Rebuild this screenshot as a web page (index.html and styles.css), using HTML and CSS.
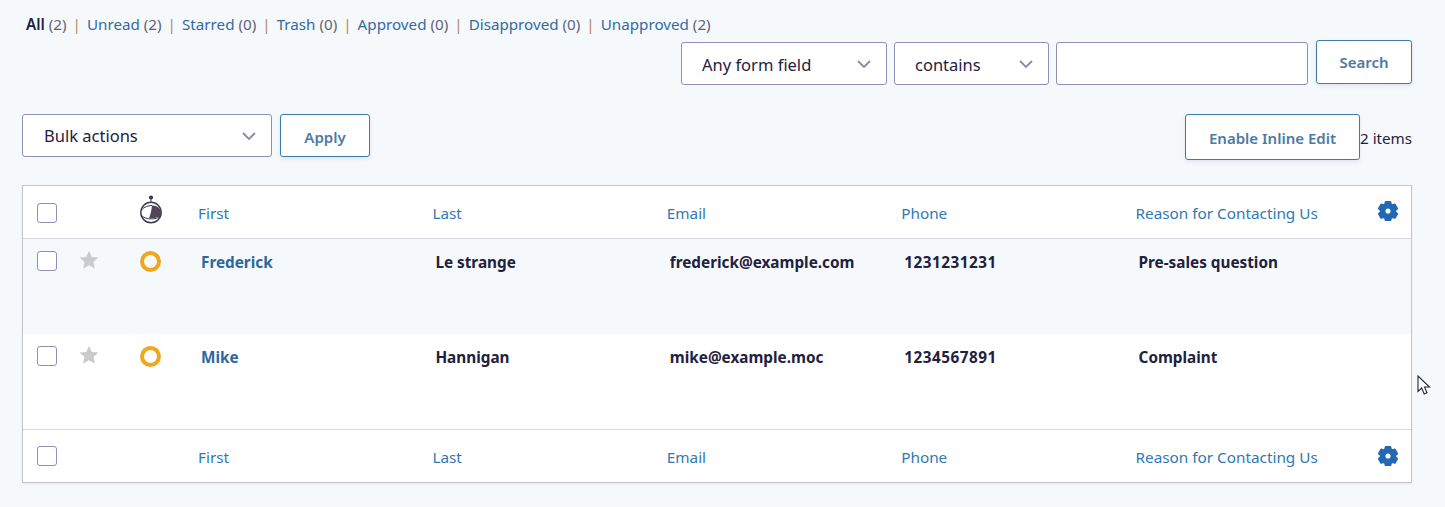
FILE: index.html
```html
<!DOCTYPE html>
<html lang="en">
<head>
<meta charset="utf-8">
<title>Entries</title>
<link rel="stylesheet" href="styles.css">
</head>
<body>
<svg class="defs" width="0" height="0" aria-hidden="true">
  <symbol id="gear" viewBox="1 1 18 18">
    <path fill-rule="evenodd" stroke-width="1.400" stroke-linejoin="round" d="M7.800 1.700h4.400l.5 2.200 1.300.8 2.200-.7 2.200 3.900-1.700 1.500v1.600l1.700 1.500-2.200 3.900-2.200-.7-1.300.8-.5 2.200H7.800l-.5-2.200-1.300-.8-2.200.7-2.200-3.900 1.700-1.500V9.200L1.600 7.900l2.200-3.900 2.200.7 1.300-.8zM10 7a3 3 0 1 0 0 6 3 3 0 0 0 0-6z"/>
  </symbol>
  <symbol id="star" viewBox="0 0 20 20">
    <path d="M10 .8l2.800 6.100 6.600.7-4.900 4.500 1.400 6.600L10 15.300l-5.900 3.400 1.400-6.600L.6 7.600l6.600-.7z"/>
  </symbol>
</svg>
<main class="page">
  <ul class="filters">
    <li><a class="current">All</a> <span class="count">(2)</span></li>
    <li><a>Unread</a> <span class="count">(2)</span></li>
    <li><a>Starred</a> <span class="count">(0)</span></li>
    <li><a>Trash</a> <span class="count">(0)</span></li>
    <li><a>Approved</a> <span class="count">(0)</span></li>
    <li><a>Disapproved</a> <span class="count">(0)</span></li>
    <li><a>Unapproved</a> <span class="count">(2)</span></li>
  </ul>
  <div class="search-row">
    <div class="select w-field">Any form field<svg class="chev" viewBox="0 0 14 8"><path d="M1 1l6 6 6-6"/></svg></div>
    <div class="select w-op">contains<svg class="chev" viewBox="0 0 14 8"><path d="M1 1l6 6 6-6"/></svg></div>
    <div class="input"></div>
    <button class="btn btn-search">Search</button>
  </div>
  <div class="action-row">
    <div class="select w-bulk">Bulk actions<svg class="chev" viewBox="0 0 14 8"><path d="M1 1l6 6 6-6"/></svg></div>
    <button class="btn btn-apply">Apply</button>
    <div class="spacer"></div>
    <button class="btn btn-inline">Enable Inline Edit</button>
    <span class="items">2 items</span>
  </div>
  <table class="entries">
    <colgroup>
      <col class="c-check"><col class="c-star"><col class="c-read">
      <col class="c-data"><col class="c-data"><col class="c-data"><col class="c-data"><col class="c-data">
      <col class="c-gear">
    </colgroup>
    <thead>
      <tr>
        <th><span class="box"></span></th>
        <th></th>
        <th class="icon-cell">
          <svg class="timer" viewBox="0 0 24 29">
            <circle cx="12" cy="2.500" r="2.100" fill="#3e3a4a"/>
            <path d="M12 4v3.500" stroke="#3e3a4a" stroke-width="1"/>
            <circle cx="12" cy="17.500" r="10.200" fill="#fff" stroke="#3e3a4a" stroke-width="1.400"/>
            <path d="M2.500 15C5 12 9 10.500 13 10.500M2.500 20.500c4 4.500 15 4.500 19 .5" fill="none" stroke="#3e3a4a" stroke-width="1"/>
            <path d="M13 10.500c4.500-.5 9 2.500 9 7 0 1.800-.5 3-1.200 4-3 1.500-7 2-10.800 1.700 1.800-4 2.500-8.500 3-12.700z" fill="#51455a"/>
          </svg>
        </th>
        <th><a>First</a></th><th><a>Last</a></th><th><a>Email</a></th><th><a>Phone</a></th><th><a>Reason for Contacting Us</a></th>
        <th class="gear-cell"><svg class="gear"><use href="#gear"/></svg></th>
      </tr>
    </thead>
    <tbody>
      <tr class="row alt">
        <td><span class="box"></span></td>
        <td><svg class="star"><use href="#star"/></svg></td>
        <td><span class="ring"></span></td>
        <td><a class="name">Frederick</a></td><td>Le strange</td><td>frederick@example.com</td><td class="digits">1231231231</td><td>Pre-sales question</td><td></td>
      </tr>
      <tr class="row">
        <td><span class="box"></span></td>
        <td><svg class="star"><use href="#star"/></svg></td>
        <td><span class="ring"></span></td>
        <td><a class="name">Mike</a></td><td>Hannigan</td><td>mike@example.moc</td><td class="digits">1234567891</td><td>Complaint</td><td></td>
      </tr>
    </tbody>
    <tfoot>
      <tr>
        <th><span class="box"></span></th><th></th><th></th>
        <th><a>First</a></th><th><a>Last</a></th><th><a>Email</a></th><th><a>Phone</a></th><th><a>Reason for Contacting Us</a></th>
        <th class="gear-cell"><svg class="gear"><use href="#gear"/></svg></th>
      </tr>
    </tfoot>
  </table>
</main>
<svg class="cursor" viewBox="0 0 14 22"><path d="M1 1v15.500l3.700-3.500 2.500 6 2.800-1.200-2.500-5.800H12.500z" fill="#fff" stroke="#23233a" stroke-width="1.100"/></svg>
</body>
</html>
```
FILE: styles.css
```css
* { box-sizing: border-box; }
html, body { margin: 0; height: 100%; }
body {
  background: #f6f9fc;
  color: #1f2140;
  font-family: "Noto Sans", "Open Sans", sans-serif;
  font-size: 15px;
  overflow: hidden;
  position: relative;
}
.defs { position: absolute; }
.page { padding: 14px 33px 0 22px; }

.filters {
  list-style: none;
  margin: 0;
  padding: 0 0 0 4px;
  display: flex;
  height: 20px;
  line-height: 20px;
  font-size: 15.200px;
  color: #5f6478;
}
.filters li + li::before { content: "|"; color: #b08a60; margin: 0 6px 0 6px; }
.filters a { color: #34699f; }
.filters a.current { color: #1f2140; font-weight: 600; }

.search-row {
  display: flex;
  align-items: flex-start;
  justify-content: flex-end;
  margin-top: 6px;
  height: 44px;
}
.select {
  position: relative;
  height: 43px;
  background: #fff;
  border: 1px solid #8f8fb8;
  border-radius: 3px;
  font-size: 16.500px;
  line-height: 41px;
  padding-left: 21px;
  white-space: nowrap;
}
.search-row .select { margin-top: 2px; padding-left: 20px; line-height: 43px; }
.chev {
  position: absolute;
  right: 15px;
  top: 17px;
  width: 14px;
  height: 8px;
  fill: none;
  stroke: #8a8ca5;
  stroke-width: 1.800;
}
.w-field { width: 206px; margin-right: 7px; }
.w-op { width: 155px; margin-right: 7px; }
.w-bulk { width: 250px; margin: 0 8px 0 0; }
.input {
  width: 252px;
  height: 43px;
  margin: 2px 8px 0 0;
  background: #fff;
  border: 1px solid #8f8fb8;
  border-radius: 3px;
}
.btn {
  background: #fff;
  border: 1px solid #3a7cab;
  border-radius: 3px;
  box-shadow: 0 2px 4px rgba(40, 60, 100, .1);
  color: #4d7aa3;
  font-family: inherit;
  font-size: 15px;
  font-weight: 600;
  padding: 0;
}
.btn-search { width: 96px; height: 44px; }
.btn-apply { width: 90px; height: 43px; padding-top: 2px; }
.btn-inline { width: 175px; height: 46px; padding-top: 2px; }

.action-row {
  display: flex;
  align-items: flex-start;
  margin-top: 30px;
  height: 46px;
}
.spacer { flex: 1; }
.items { align-self: center; font-size: 15.200px; margin-top: 1px; white-space: nowrap; width: 52px; text-align: right; }

.entries {
  width: 1390px;
  margin-top: 25px;
  table-layout: fixed;
  border-collapse: separate;
  border-spacing: 0;
  background: #fff;
  border: 1px solid #c5c5cd;
  box-shadow: 0 1px 2px rgba(40, 60, 100, .08);
}
.c-check { width: 56px; }
.c-star { width: 61px; }
.c-read { width: 58px; }
.c-data { width: 234.400px; }
.c-gear { width: 41px; }

.entries th {
  padding: 2px 0 0 24px;
  font-weight: 400;
  text-align: left;
  font-size: 15.300px;
  vertical-align: middle;
}
.entries th:nth-child(n+4) { padding-left: 0; }
.entries th a { color: #2f79b5; }
.entries thead th { border-bottom: 1px solid #d6d6e6; height: 53px; }
.entries tfoot th { border-top: 1px solid #d6d6e6; height: 53px; padding-top: 1px; }
.entries th:first-child, .row td:first-child { padding-left: 14px; }
.entries tfoot th:first-child { padding-top: 0; padding-bottom: 1px; }
.row { height: 95px; }
.row td {
  vertical-align: top;
  padding: 13px 0 0 3px;
  font-size: 15.300px;
  font-weight: 700;
  line-height: 20px;
  color: #1f2140;
}
.row td.digits { letter-spacing: .5px; }
.row.alt td { background: #f6f9fc; }
.name { color: #2c689f; }

.box {
  display: block;
  width: 20px;
  height: 20px;
  background: #fff;
  border: 1px solid #8f8fb8;
  border-radius: 3px;
}
.row td .box { margin-top: -1px; }
.row td:nth-child(2), .row td:nth-child(3) { padding-left: 0; }
.star { display: block; width: 20px; height: 20px; fill: #cbcbcb; margin-top: -2px; }
.ring {
  display: block;
  width: 21px;
  height: 21px;
  margin-top: -1px;
  border: 4px solid #eea81f;
  border-radius: 50%;
}
.entries th.icon-cell { padding: 0 0 6px 0; }
.timer { display: block; width: 24px; height: 29px; margin-left: -1px; }
.entries th.gear-cell { padding: 0 0 5px 7px; }
.entries tfoot th.gear-cell { padding: 0 0 3px 7px; }
.gear { display: block; width: 20px; height: 20px; fill: #2269b2; stroke: #2269b2; position: relative; top: 1px; left: 1.500px; }

.cursor { position: absolute; left: 1417px; top: 375px; width: 14px; height: 22px; }
```
